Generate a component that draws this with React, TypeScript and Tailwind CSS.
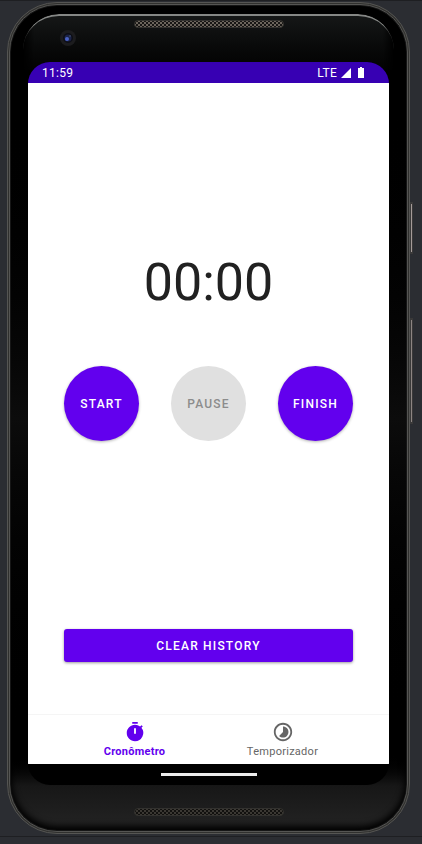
import React from "react";

function SpeakerGrille({ id, dot, base }: { id: string; dot: string; base: string }) {
  return (
    <svg className="h-2 w-[150px]" aria-hidden="true">
      <defs>
        <pattern id={id} width="4" height="4" patternUnits="userSpaceOnUse">
          <rect width="4" height="4" fill={base} />
          <rect x="0" y="0" width="2" height="2" fill={dot} />
          <rect x="2" y="2" width="2" height="2" fill={dot} />
        </pattern>
      </defs>
      <rect x="0.5" y="0.5" width="149" height="7" rx="3.5" fill={`url(#${id})`} stroke="#33322f" />
    </svg>
  );
}

function Camera() {
  return (
    <svg className="size-4" viewBox="0 0 16 16" aria-hidden="true">
      <circle cx="8" cy="8" r="8" fill="#1c1c1e" />
      <circle cx="8" cy="8" r="5" fill="#0d0e16" />
      <circle cx="8" cy="8" r="3.5" fill="#1b2347" />
      <circle cx="7" cy="9" r="2" fill="#4a62c4" />
      <circle cx="10" cy="6" r="1" fill="#35405f" />
    </svg>
  );
}

function StatusBar() {
  return (
    <div className="flex h-[21px] items-center justify-between bg-[#3700b3] pr-[25px] pl-3.5 text-xs tracking-wide text-white">
      <span>11:59</span>
      <div className="flex items-center">
        <span>LTE</span>
        <svg className="ml-1 size-[10px]" viewBox="0 0 10 10" fill="currentColor" aria-hidden="true">
          <path d="M10 0v10H0z" />
        </svg>
        <svg className="ml-[7px] h-[11px] w-[6px]" viewBox="0 0 6 11" fill="currentColor" aria-hidden="true">
          <path d="M2 0h2v1h2v10H0V1h2z" />
        </svg>
      </div>
    </div>
  );
}

function RoundButton({ label, disabled = false }: { label: string; disabled?: boolean }) {
  return (
    <button
      type="button"
      disabled={disabled}
      className="size-[75px] rounded-full bg-[#6200ee] text-xs font-medium tracking-widest text-white shadow-[0_1px_3px_rgba(0,0,0,0.3)] disabled:bg-[#e0e0e0] disabled:text-[#8c8c8c] disabled:shadow-none"
    >
      {label}
    </button>
  );
}

function BottomNav() {
  return (
    <nav className="flex h-[50px] justify-center border-t border-[#f5f5f5] bg-white text-[11px] leading-[14px] tracking-wide">
      <a href="#cronometro" aria-current="page" className="flex w-[148px] flex-col items-center pt-1.5 font-bold text-[#6200ee]">
        <svg className="size-[22px]" viewBox="0 0 24 24" fill="currentColor" aria-hidden="true">
          <path d="M9 1h6v2H9zm10.030 6.390 1.420-1.420c-.43-.51-.9-.99-1.410-1.410l-1.420 1.420A8.962 8.962 0 0 0 12 4c-4.970 0-9 4.030-9 9s4.020 9 9 9a8.994 8.994 0 0 0 7.030-14.610zM13 14h-2V8h2v6z" />
        </svg>
        <span className="mt-0.5">Cronômetro</span>
      </a>
      <a href="#temporizador" className="flex w-[148px] flex-col items-center pt-1.5 text-[#666666]">
        <svg className="size-[22px]" viewBox="0 0 24 24" fill="currentColor" aria-hidden="true">
          <path d="M16.240 7.760C15.070 6.590 13.540 6 12 6v6l-4.240 4.240c2.340 2.340 6.140 2.340 8.490 0a5.990 5.990 0 0 0-.01-8.480zM12 2C6.480 2 2 6.480 2 12s4.480 10 10 10 10-4.480 10-10S17.520 2 12 2zm0 18c-4.420 0-8-3.580-8-8s3.580-8 8-8 8 3.580 8 8-3.580 8-8 8z" />
        </svg>
        <span className="mt-0.5">Temporizador</span>
      </a>
    </nav>
  );
}

function Screen() {
  return (
    <div className="relative mx-[17px] overflow-hidden rounded-[22px] bg-black">
      <StatusBar />
      <main className="flex flex-col bg-white pr-9 pl-9 pt-[170px] pb-[52px]">
        <div className="text-center text-[52px] leading-[60px] text-[#212121]">00:00</div>
        <div className="mt-[53px] flex justify-between">
          <RoundButton label="START" />
          <RoundButton label="PAUSE" disabled />
          <RoundButton label="FINISH" />
        </div>
        <button
          type="button"
          className="mt-[188px] h-[33px] rounded-[3px] bg-[#6200ee] text-xs font-medium tracking-widest text-white shadow-[0_1px_3px_rgba(0,0,0,0.4)]"
        >
          CLEAR HISTORY
        </button>
      </main>
      <BottomNav />
      <div className="flex h-[21px] items-center justify-center">
        <div className="h-[3px] w-24 bg-[#ececec]" />
      </div>
    </div>
  );
}

export default function App() {
  return (
    <div className="min-h-screen border-t border-[#1e1f22] bg-[#2b2d32] pt-px font-['Roboto','Noto_Sans',sans-serif]">
      <div className="relative mr-3 ml-[7px]">
        {/* Power and volume keys */}
        <div className="absolute top-[200px] -right-[3px] h-[52px] w-[3px] border-x border-y-2 border-[#3a3939] bg-[#a59b99]" />
        <div className="absolute top-[316px] -right-[3px] h-[106px] w-[3px] border-x border-y-2 border-[#3a3939] bg-[#8d8583]" />

        <div className="rounded-[50px] border border-[#555553] bg-[#30302e] p-px">
          <div className="rounded-[48px] border border-[#555553] bg-[#161616] p-px">
            <div className="relative overflow-hidden rounded-[46px] bg-linear-to-b from-black from-10% via-[#0c0c0c] via-50% to-black to-90%">
              {/* Glass at the top and the chin at the bottom */}
              <div className="absolute inset-x-3 top-2 h-14 rounded-t-[36px] border-t-2 border-[#858785] bg-linear-to-b from-[#151717] to-[#030303] mask-x-from-97% mask-x-to-100%" />
              <div className="absolute inset-x-0 bottom-0 h-20 rounded-b-[46px] bg-linear-to-b from-black via-[#171717] via-45% to-[#242424] shadow-[inset_0_-3px_6px_1px_#000000]" />

              <div className="relative grid h-14 grid-cols-[1fr_auto_1fr] items-start pt-3.5">
                <div className="pt-2.5 pl-[49px]">
                  <Camera />
                </div>
                <SpeakerGrille id="earpiece" dot="#6b645b" base="#171614" />
              </div>

              <Screen />

              <div className="relative flex h-[45px] justify-center pt-[23px]">
                <SpeakerGrille id="loudspeaker" dot="#3b3833" base="#12110f" />
              </div>
            </div>
          </div>
        </div>
      </div>
      <div className="mt-0.5 h-2 border-t border-[#1e1f22]" />
    </div>
  );
}
